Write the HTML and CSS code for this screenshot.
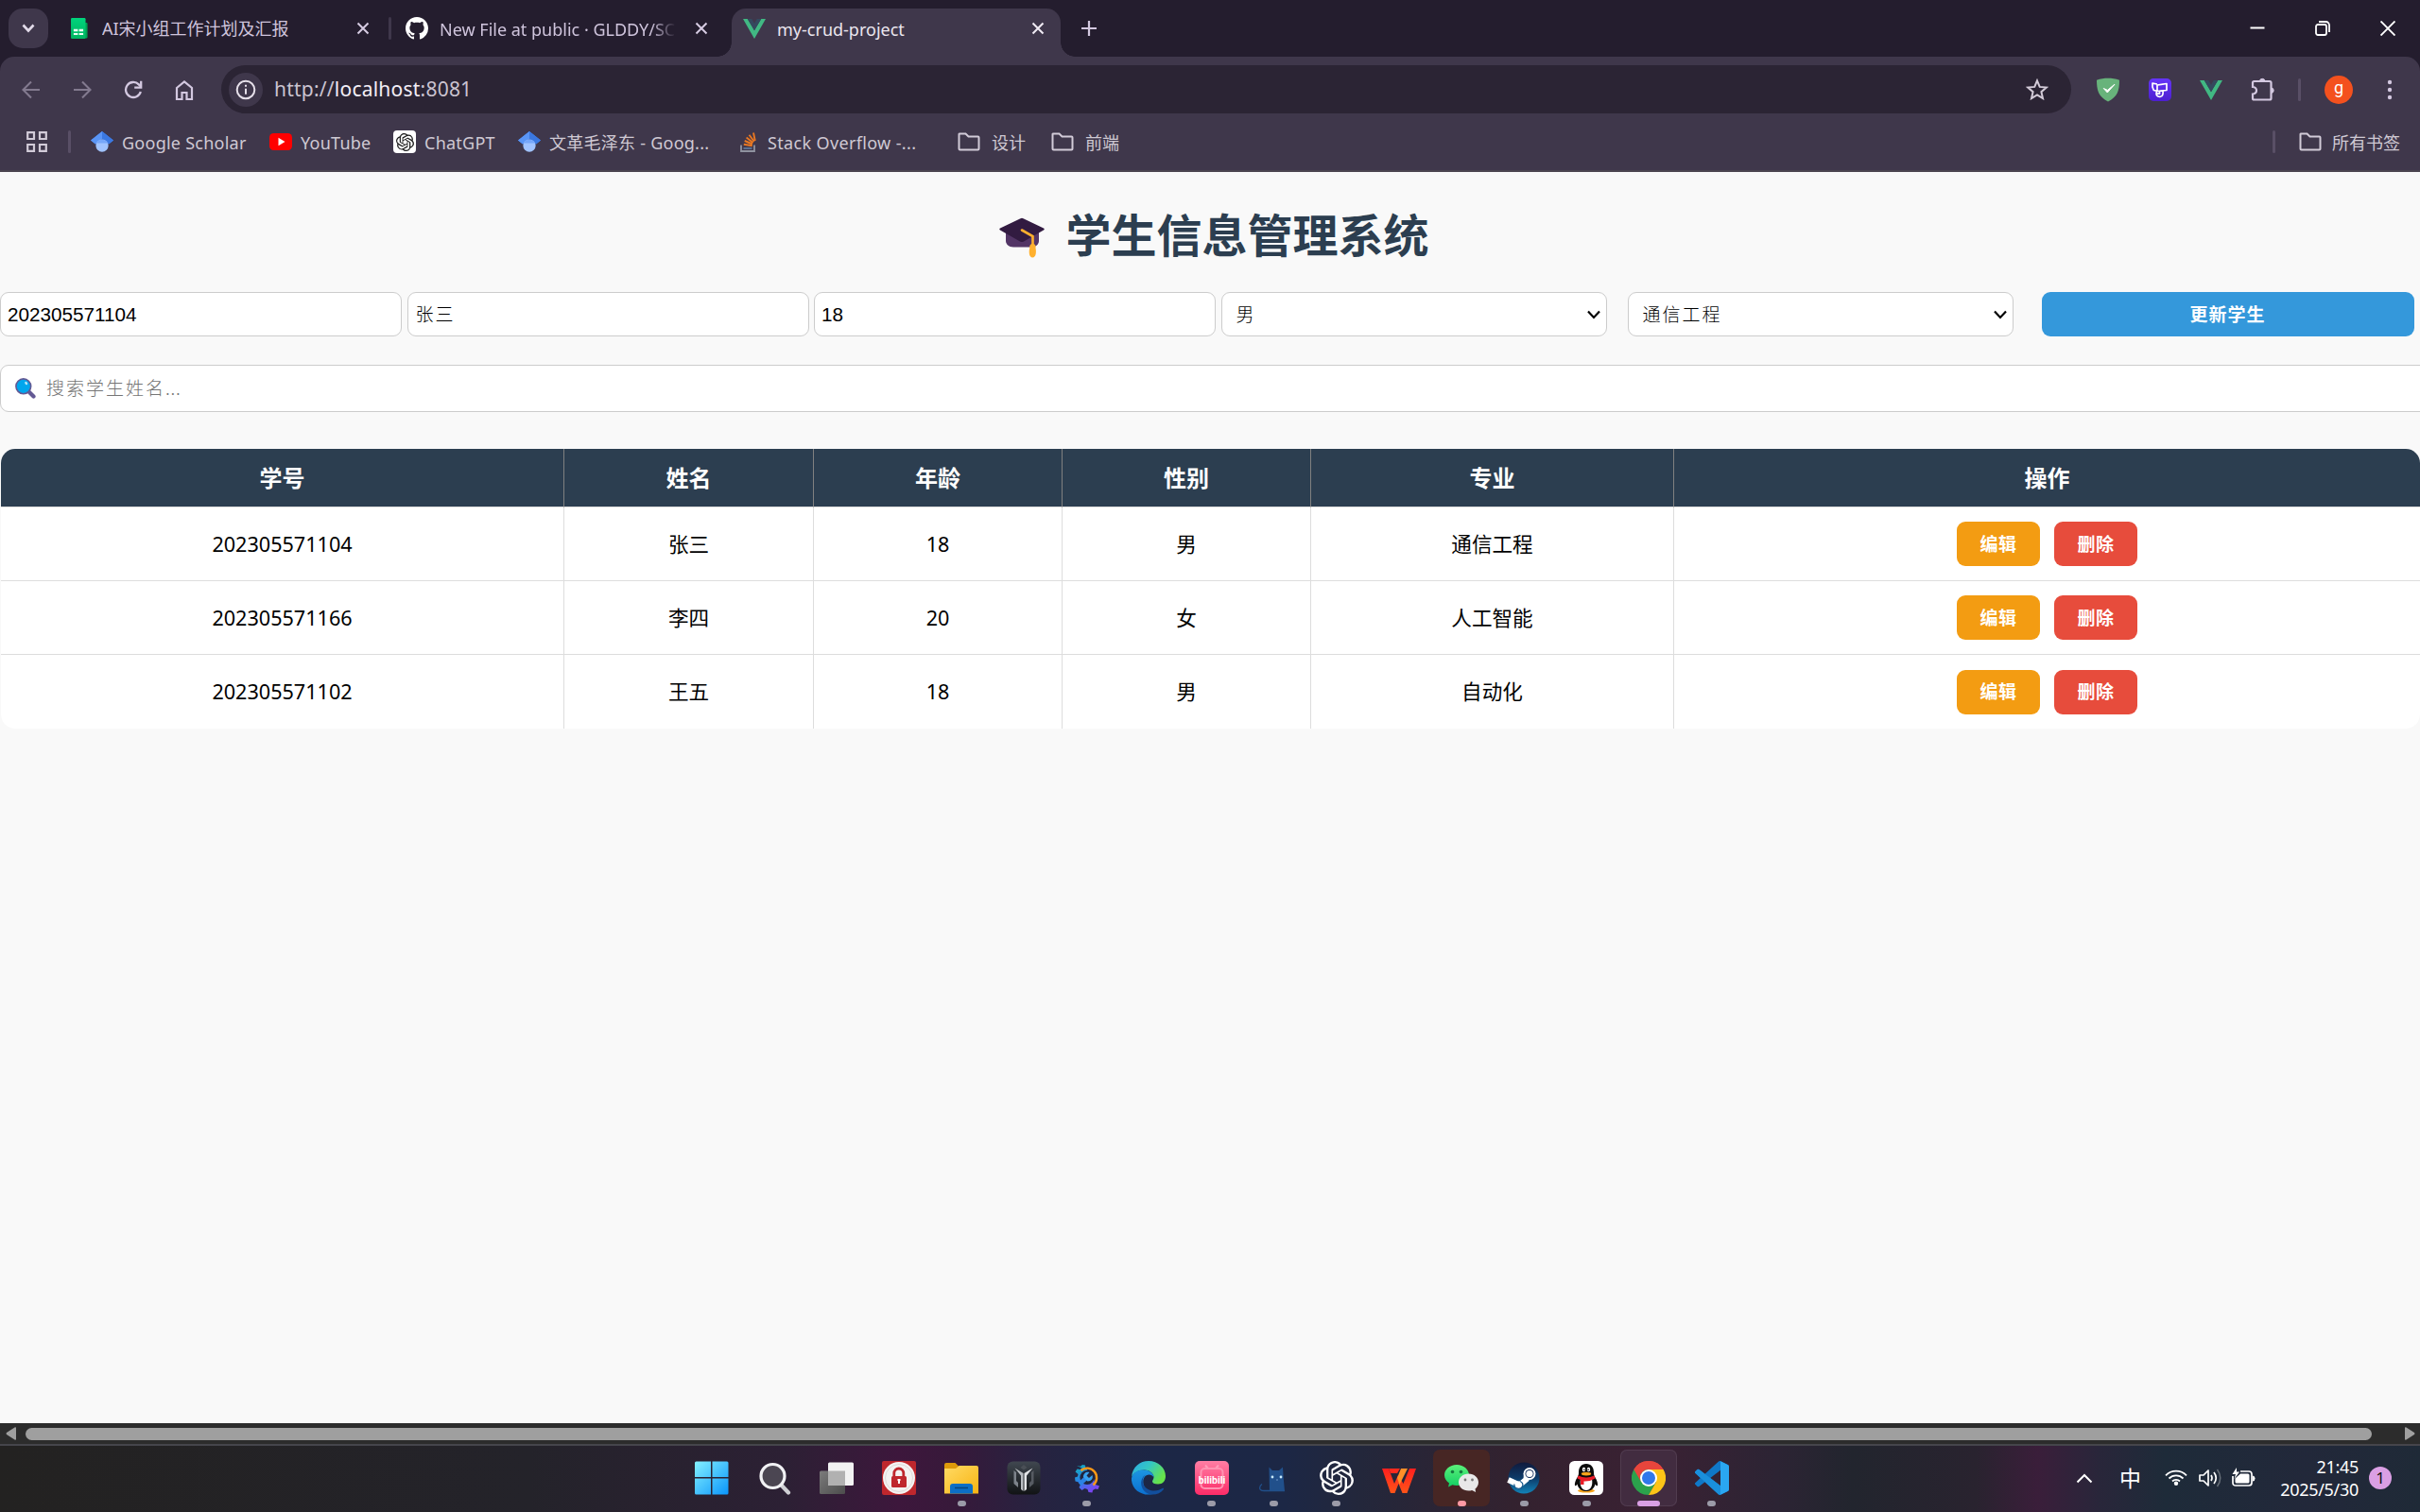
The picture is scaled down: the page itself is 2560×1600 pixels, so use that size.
FILE: index.html
```html
<!DOCTYPE html>
<html lang="zh-CN">
<head>
<meta charset="utf-8">
<title>my-crud-project</title>
<link rel="stylesheet" href="styles.css">
</head>
<body>
<svg class="defs" width="0" height="0" aria-hidden="true">
  <defs>
    <linearGradient id="win" x1="0" y1="0" x2="1" y2="1"><stop offset="0" stop-color="#84f1ff"/><stop offset="1" stop-color="#0a95fb"/></linearGradient>
    <linearGradient id="sheet" x1="0" y1="0" x2="0" y2="1"><stop offset="0" stop-color="#00d47c"/><stop offset="1" stop-color="#00b562"/></linearGradient>
    <linearGradient id="purple" x1="0" y1="0" x2="0" y2="1"><stop offset="0" stop-color="#6535f8"/><stop offset="1" stop-color="#4d1fd0"/></linearGradient>
    <linearGradient id="fold" x1="0" y1="0" x2="1" y2="1"><stop offset="0" stop-color="#ffdb64"/><stop offset="1" stop-color="#f8b413"/></linearGradient>
    <linearGradient id="gear" x1="0" y1="0" x2=".6" y2="1"><stop offset="0" stop-color="#0fb5b4"/><stop offset=".5" stop-color="#2a84e8"/><stop offset="1" stop-color="#7a45f2"/></linearGradient>
    <linearGradient id="edgeTop" x1="0" y1="0" x2="1" y2=".5"><stop offset="0" stop-color="#2aa8e6"/><stop offset=".5" stop-color="#34c7c4"/><stop offset="1" stop-color="#66e34b"/></linearGradient>
    <linearGradient id="edgeLow" x1="0" y1="0" x2="0" y2="1"><stop offset="0" stop-color="#1c96e2"/><stop offset="1" stop-color="#0c70cf"/></linearGradient>
    <linearGradient id="bili" x1="0" y1="0" x2="0" y2="1"><stop offset="0" stop-color="#ff7ea4"/><stop offset="1" stop-color="#fc2c68"/></linearGradient>
    <linearGradient id="wps" x1="0" y1="0" x2="0" y2="1"><stop offset="0" stop-color="#fd1f1f"/><stop offset="1" stop-color="#ff5418"/></linearGradient>
    <linearGradient id="wx" x1="0" y1="0" x2="0" y2="1"><stop offset="0" stop-color="#5bf07a"/><stop offset="1" stop-color="#12cf63"/></linearGradient>
    <linearGradient id="steam" x1="0" y1="0" x2="0" y2="1"><stop offset="0" stop-color="#101a3c"/><stop offset=".5" stop-color="#0d3a68"/><stop offset="1" stop-color="#1283b8"/></linearGradient>
    <linearGradient id="metal" x1="0" y1="0" x2="0" y2="1"><stop offset="0" stop-color="#404750"/><stop offset="1" stop-color="#111315"/></linearGradient>
    <linearGradient id="tv" x1="0" y1="0" x2="1" y2="1"><stop offset="0" stop-color="#7c7c7c"/><stop offset="1" stop-color="#4c4c4c"/></linearGradient>
    <symbol id="close" viewBox="0 0 14 14"><path d="M1.5 1.5 12.5 12.5M12.5 1.5 1.5 12.5" stroke="currentColor" stroke-width="2" fill="none"/></symbol>
    <symbol id="vue" viewBox="0 0 24 21"><path d="M0 0h4.8L12 12.2 19.200 0H24L12 21z" fill="#41b883"/><path d="M4.800 0h4.500L12 4.700 14.700 0h4.500L12 12.200z" fill="#34495e"/></symbol>
    <symbol id="folder" viewBox="0 0 24 20"><path d="M2 1.500h6.500l3 3H21.500a1 1 0 0 1 1 1V17.500a1 1 0 0 1-1 1H2.500a1 1 0 0 1-1-1V2z" fill="none" stroke="#d2cbd8" stroke-width="2"/></symbol>
    <symbol id="scholar" viewBox="0 0 24 22"><path d="M12 0 0 9.500l5 4L12 8l7 5.500 5-4z" fill="#4285f4"/><path d="M12 0v8l-7 5.500L0 9.500z" fill="#5a95f5"/><path d="M12 0 24 9.500l-5 4-7-5.500z" fill="#3b78e0"/><circle cx="12" cy="15.200" r="6.600" fill="#a0c3ff"/><path d="M6 12.600a6.600 6.600 0 0 1 12 0z" fill="#76a7fa"/></symbol>
    <symbol id="openai" viewBox="0 0 24 24"><path fill="currentColor" d="M22.2819 9.8211a5.9847 5.9847 0 0 0-.5157-4.9108 6.0462 6.0462 0 0 0-6.5098-2.9A6.0651 6.0651 0 0 0 4.9807 4.1818a5.9847 5.9847 0 0 0-3.9977 2.9 6.0462 6.0462 0 0 0 .7427 7.0966 5.98 5.98 0 0 0 .511 4.9107 6.051 6.051 0 0 0 6.5146 2.9001A5.9847 5.9847 0 0 0 13.2599 24a6.0557 6.0557 0 0 0 5.7718-4.2058 5.9894 5.9894 0 0 0 3.9977-2.9001 6.0557 6.0557 0 0 0-.7475-7.0729zm-9.022 12.6081a4.4755 4.4755 0 0 1-2.8764-1.0408l.1419-.0804 4.7783-2.7582a.7948.7948 0 0 0 .3927-.6813v-6.7369l2.02 1.1686a.071.071 0 0 1 .038.052v5.5826a4.504 4.504 0 0 1-4.4945 4.4944zm-9.6607-4.1254a4.4708 4.4708 0 0 1-.5346-3.0137l.142.0852 4.783 2.7582a.7712.7712 0 0 0 .7806 0l5.8428-3.3685v2.3324a.0804.0804 0 0 1-.0332.0615L9.74 19.9502a4.4992 4.4992 0 0 1-6.1408-1.6464zM2.3408 7.8956a4.485 4.485 0 0 1 2.3655-1.9728V11.6a.7664.7664 0 0 0 .3879.6765l5.8144 3.3543-2.0201 1.1685a.0757.0757 0 0 1-.071 0l-4.8303-2.7865A4.504 4.504 0 0 1 2.3408 7.872zm16.5963 3.8558L13.1038 8.364 15.1192 7.2a.0757.0757 0 0 1 .071 0l4.8303 2.7913a4.4944 4.4944 0 0 1-.6765 8.1042v-5.6772a.79.79 0 0 0-.407-.667zm2.0107-3.0231l-.142-.0852-4.7735-2.7818a.7759.7759 0 0 0-.7854 0L9.409 9.2297V6.8974a.0662.0662 0 0 1 .0284-.0615l4.8303-2.7866a4.4992 4.4992 0 0 1 6.6802 4.66zM8.3065 12.863l-2.02-1.1638a.0804.0804 0 0 1-.038-.0567V6.0742a4.4992 4.4992 0 0 1 7.3757-3.4537l-.142.0805L8.704 5.459a.7948.7948 0 0 0-.3927.6813zm1.0976-2.3654l2.602-1.4998 2.6069 1.4998v2.9994l-2.5974 1.4997-2.6067-1.4997Z"/></symbol>
  </defs>
</svg>

<header class="tabstrip">
  <button class="tab-search"><svg width="14" height="10" viewBox="0 0 14 10"><path d="M1.500 1.500 7 7.500 12.500 1.500" fill="none" stroke="#e2dbe9" stroke-width="2.600"/></svg></button>
  <div class="tab tab-one">
    <svg width="22" height="27" viewBox="0 0 22 27"><path d="M17 6h3a1.500 1.500 0 0 1 1.500 1.500V25a1.500 1.500 0 0 1-1.500 1.500h-5z" fill="#00a052"/><rect x="0" y="0" width="19" height="27" rx="1.500" fill="url(#sheet)"/><path d="M3.500 14.500h5.500v3H3.500zm7 0h5.500v3h-5.500zm-7 5h5.500v2.500H3.500zm7 0h5.500v2.500h-5.500z" fill="#eafff4"/></svg>
    <span class="tab-title t1">AI宋小组工作计划及汇报</span>
    <svg class="x" width="14" height="14"><use href="#close"/></svg>
  </div>
  <i class="tab-sep"></i>
  <div class="tab tab-two">
    <svg width="24" height="24" viewBox="0 0 16 16"><path fill="#fff" d="M8 0C3.580 0 0 3.580 0 8c0 3.540 2.290 6.530 5.470 7.590.4.070.55-.17.55-.38 0-.19-.01-.82-.01-1.490-2.010.37-2.530-.49-2.690-.94-.09-.23-.48-.94-.82-1.130-.28-.15-.68-.52-.01-.53.63-.01 1.080.58 1.230.82.72 1.210 1.870.87 2.330.66.070-.52.28-.87.51-1.070-1.780-.2-3.640-.89-3.640-3.950 0-.87.31-1.590.82-2.150-.08-.2-.36-1.020.08-2.120 0 0 .67-.21 2.200.82.64-.18 1.320-.27 2-.27s1.360.09 2 .27c1.530-1.040 2.200-.82 2.200-.82.44 1.100.16 1.920.08 2.120.51.56.82 1.270.82 2.150 0 3.070-1.870 3.750-3.650 3.950.29.25.54.73.54 1.480 0 1.070-.01 1.930-.01 2.200 0 .21.15.46.55.38A8.010 8.010 0 0 0 16 8c0-4.420-3.580-8-8-8z"/></svg>
    <span class="tab-title t2">New File at public · GLDDY/SC</span>
    <svg class="x" width="14" height="14"><use href="#close"/></svg>
  </div>
  <div class="tab tab-active">
    <svg class="vue" width="24" height="21"><use href="#vue"/></svg>
    <span class="tab-title t3">my-crud-project</span>
    <svg class="x" width="14" height="14"><use href="#close"/></svg>
  </div>
  <svg class="plus" width="16" height="16" viewBox="0 0 16 16"><path d="M8 0v16M0 8h16" stroke="#d3c8e0" stroke-width="2.200"/></svg>
  <div class="window-buttons">
    <svg width="16" height="16" viewBox="0 0 16 16"><path d="M.5 7.500h15" stroke="#fff" stroke-width="2"/></svg>
    <svg width="16" height="16" viewBox="0 0 16 16"><rect x="1" y="4" width="11" height="11" rx="2" fill="none" stroke="#fff" stroke-width="1.800"/><path d="M4 1h7.500A3.500 3.500 0 0 1 15 4.500V12" fill="none" stroke="#fff" stroke-width="1.800"/></svg>
    <svg width="16" height="16" viewBox="0 0 16 16"><path d="M.5.5l15 15M15.500.5l-15 15" stroke="#fff" stroke-width="1.900"/></svg>
  </div>
</header>

<nav class="chrome">
  <div class="toolbar">
    <div class="nav-icons">
      <svg width="20" height="20" viewBox="0 0 20 20"><path d="M19 10H2M10 1.500 1.500 10l8.500 8.500" fill="none" stroke="#837a8f" stroke-width="2.100"/></svg>
      <svg width="20" height="20" viewBox="0 0 20 20"><path d="M1 10h17M10 1.500 18.500 10 10 18.500" fill="none" stroke="#837a8f" stroke-width="2.100"/></svg>
      <svg width="20" height="20" viewBox="0 0 20 20"><path d="M17.800 12A8 8 0 1 1 15.800 4.400l2 2" fill="none" stroke="#d3c8e0" stroke-width="2.300"/><path d="M18.200.8v6.900h-7" fill="none" stroke="#d3c8e0" stroke-width="2.300"/></svg>
      <svg width="20" height="21" viewBox="0 0 20 21"><path d="M2 8 10 1.500 18 8v12h-5.500v-7h-5v7H2z" fill="none" stroke="#d3c8e0" stroke-width="2.200"/></svg>
    </div>
    <div class="omnibox">
      <span class="info"><svg width="22" height="22" viewBox="0 0 22 22"><circle cx="11" cy="11" r="9.300" fill="none" stroke="#e6e0ea" stroke-width="2"/><path d="M11 9.800v6M11 5.800v2" stroke="#e6e0ea" stroke-width="2"/></svg></span>
      <span class="url">http://<b>localhost</b>:8081</span>
      <svg class="star" width="24" height="23" viewBox="0 0 24 23"><path d="m12 2.300 2.700 6.600 7.100.6-5.400 4.700 1.600 6.900-6-3.700-6 3.700 1.600-6.900L2.200 9.500l7.100-.6z" fill="none" stroke="#d3cbd8" stroke-width="2"/></svg>
    </div>
    <div class="extensions">
      <svg width="26" height="26" viewBox="0 0 26 26"><path d="M13 .8C17 .8 21 1.400 25 2.800 25 14 23 20.500 13 25.500 3 20.500 1 14 1 2.800 5 1.400 9 .8 13 .8z" fill="#68b37b"/><path d="m8.300 11.500 4 4.500L20 7.200l-7.600 6.200z" fill="#fff" stroke="#fff" stroke-width="1"/></svg>
      <svg width="26" height="26" viewBox="0 0 26 26"><rect x="1" y="1" width="24" height="24" rx="5" fill="url(#purple)"/><path d="M10 7 5 6.200V10l1.300 3.500 4 .8M10 8v6.500l10-1V6.500zM9.500 14.500c-1.500 4.500 1 6 3.500 5.800s3.500-2.500 3-6M9.500 17.200h3v-2.500" fill="none" stroke="#fff" stroke-width="1.700" stroke-linejoin="round"/></svg>
      <svg width="24" height="21"><use href="#vue"/></svg>
      <svg width="26" height="26" viewBox="0 0 26 26"><path d="M2 5.500a1.500 1.500 0 0 1 1.500-1.500H20a1.500 1.500 0 0 1 1.500 1.500V22a1.500 1.500 0 0 1-1.500 1.500H3.500A1.500 1.500 0 0 1 2 22v-4.500q4-.5 4-3.800T2 10z" fill="none" stroke="#d3c8e0" stroke-width="2.200"/><path d="M9.500 4a2.700 2.700 0 0 1 5.400 0zM21.500 11a2.700 2.700 0 0 1 0 5.400z" fill="#d3c8e0" stroke="#d3c8e0"/></svg>
      <i class="sep"></i>
      <span class="avatar">g</span>
      <svg width="6" height="22" viewBox="0 0 6 22"><circle cx="3" cy="3" r="2.200" fill="#d3c8e0"/><circle cx="3" cy="11" r="2.200" fill="#d3c8e0"/><circle cx="3" cy="19" r="2.200" fill="#d3c8e0"/></svg>
    </div>
  </div>
  <div class="bookmarks">
    <svg class="grid" width="22" height="22" viewBox="0 0 22 22"><path d="M1.200 1.200h6.800v6.800H1.200zm12.800 0h6.800v6.800H14zM1.200 14h6.800v6.800H1.200zM14 14h6.800v6.800H14z" fill="none" stroke="#d2cbd8" stroke-width="2.200"/></svg>
    <i class="sep"></i>
    <div class="mark m1"><svg width="24" height="26"><use href="#scholar"/></svg><span>Google Scholar</span></div>
    <div class="mark m2"><svg width="24" height="18" viewBox="0 0 24 18"><rect y="0" width="24" height="18" rx="4.500" fill="#f00"/><path d="m9.500 4.800 7 4.200-7 4.200z" fill="#fff"/></svg><span>YouTube</span></div>
    <div class="mark m3"><span class="gpt"><svg width="19" height="19"><use href="#openai"/></svg></span><span>ChatGPT</span></div>
    <div class="mark m4"><svg width="24" height="26"><use href="#scholar"/></svg><span>文革毛泽东 - Goog...</span></div>
    <div class="mark m5"><svg width="17" height="21" viewBox="0 0 17 21"><path d="M1 13.500V20h14v-6.500" fill="none" stroke="#8f93a0" stroke-width="1.800"/><path d="M3.500 17h9" stroke="#5b6f90" stroke-width="2"/><path d="m3.800 12.700 9 1.500M4.700 9l8.300 3.500M6.600 5.600l7 5.400M9.500 2.700l5.300 7M14 .5l1.800 8.500" stroke="#e87722" stroke-width="1.900"/></svg><span>Stack Overflow -...</span></div>
    <div class="mark m6"><svg width="24" height="20"><use href="#folder"/></svg><span>设计</span></div>
    <div class="mark m7"><svg width="24" height="20"><use href="#folder"/></svg><span>前端</span></div>
    <div class="all-marks"><i class="sep"></i><svg width="24" height="20"><use href="#folder"/></svg><span>所有书签</span></div>
  </div>
</nav>

<main class="page">
  <h1><svg width="48" height="48" viewBox="0 0 48 48"><path d="M7 20h35v13c0 3-3 6.500-8 6.500H15C10 39.500 7 36 7 33z" fill="#533566"/><path d="M22.500 9.200q1.500-.8 3 0L47 19.500q1.500 1 0 2L26 33.500q-2 1-4 0L1 21.500q-1.500-1 0-2z" fill="#321b41"/><path d="M24 21.500 35.500 28v10" fill="none" stroke="#ffb02e" stroke-width="2.600" stroke-linecap="round"/><path d="M35.500 36c2.500 0 3.500 2 3 4.500.8 3 .8 10-3.200 10s-4-7-3-10C31.800 38 33 36 35.500 36z" fill="#ffb02e"/></svg><span>学生信息管理系统</span></h1>

  <form class="student-form">
    <input class="field" value="202305571104" aria-label="学号">
    <input class="field zh" value="张三" aria-label="姓名">
    <input class="field" value="18" aria-label="年龄">
    <label class="pick"><span>男</span><svg width="14" height="10" viewBox="0 0 14 10"><path d="M1 1.500 7 8l6-6.500" fill="none" stroke="#000" stroke-width="2.200"/></svg></label>
    <label class="pick major"><span>通信工程</span><svg width="14" height="10" viewBox="0 0 14 10"><path d="M1 1.500 7 8l6-6.500" fill="none" stroke="#000" stroke-width="2.200"/></svg></label>
    <button type="button" class="update">更新学生</button>
  </form>

  <div class="search"><svg width="22" height="22" viewBox="0 0 22 22"><path d="m13.500 13.500 6 6" stroke="#635994" stroke-width="4.200" stroke-linecap="round"/><circle cx="8.800" cy="8.800" r="7.900" fill="#00a6ed" stroke="#635994" stroke-width="1.600"/><ellipse cx="11.700" cy="5.500" rx="1.300" ry="1.900" fill="#b4e6fa" transform="rotate(-35 11.700 5.500)"/></svg><span>搜索学生姓名<em>...</em></span></div>

  <table>
    <colgroup><col class="c1"><col class="c2"><col class="c3"><col class="c4"><col class="c5"><col class="c6"></colgroup>
    <thead><tr><th>学号</th><th>姓名</th><th>年龄</th><th>性别</th><th>专业</th><th>操作</th></tr></thead>
    <tbody>
      <tr><td>202305571104</td><td>张三</td><td>18</td><td>男</td><td>通信工程</td><td><div class="actions"><button class="edit">编辑</button><button class="delete">删除</button></div></td></tr>
      <tr><td>202305571166</td><td>李四</td><td>20</td><td>女</td><td>人工智能</td><td><div class="actions"><button class="edit">编辑</button><button class="delete">删除</button></div></td></tr>
      <tr><td>202305571102</td><td>王五</td><td>18</td><td>男</td><td>自动化</td><td><div class="actions"><button class="edit">编辑</button><button class="delete">删除</button></div></td></tr>
    </tbody>
  </table>
</main>

<div class="scrollbar">
  <svg width="11" height="14" viewBox="0 0 11 14"><path d="M11 1v12q0 1-1.500.5L1 8Q0 7 1 6L9.500.5Q11 0 11 1z" fill="#9f9f9f"/></svg>
  <div class="thumb"></div>
  <svg width="11" height="14" viewBox="0 0 11 14"><path d="M0 1v12q0 1 1.500.5L10 8q1-1 0-2L1.500.5Q0 0 0 1z" fill="#9f9f9f"/></svg>
</div>

<footer class="taskbar">
  <div class="apps">
    <div class="app"><svg viewBox="0 0 36 36"><path d="M0 2q0-1.500 1.500-1.500H17V17H0zM18.500.5H34q1.500 0 1.500 1.500v15h-17zM0 18.500h17V35.500H1.500Q0 35.500 0 34zM18.500 18.500h17V34q0 1.500-1.500 1.500H18.500z" fill="url(#win)"/></svg></div>
    <div class="app"><svg viewBox="0 0 36 36"><path d="m25.500 25.500 7.500 8" stroke="#cfcfd4" stroke-width="4.200" stroke-linecap="round"/><circle cx="16.500" cy="16" r="12.500" fill="#4b4652" stroke="#f1f1f4" stroke-width="3.200"/></svg></div>
    <div class="app"><svg viewBox="0 0 36 36"><rect x="0" y="10.500" width="27" height="24.500" rx="1.500" fill="url(#tv)"/><rect x="9" y="1.500" width="27" height="24.500" rx="1.500" fill="#f2f2f2"/><path d="M9 10.500h18V26H10.500Q9 26 9 24.500z" fill="#b1b1b1"/></svg></div>
    <div class="app"><svg viewBox="0 0 36 36"><rect width="36" height="36" rx="2" fill="#bf272d"/><circle cx="18" cy="18" r="17" fill="#f4f2f1"/><circle cx="18" cy="18" r="14.500" fill="none" stroke="#dedbd9"/><path d="M12.800 18v-5a5 5 0 0 1 10 0v5" fill="none" stroke="#bf272d" stroke-width="2.800"/><rect x="10" y="16" width="16" height="12" rx="1.500" fill="#bf272d"/><path d="M18 19v5M16.500 20h3" stroke="#fff" stroke-width="2"/></svg></div>
    <div class="app run"><svg viewBox="0 0 36 36"><path d="M0 4q0-2 2-2h9.500l3.500 3.500L12 9H0z" fill="#dd9a0a"/><path d="M0 8h12l3.500-3H34q2 0 2 2v27.500H0z" fill="url(#fold)"/><path d="M6 34.500V27q0-3 3-3h18q3 0 3 3v7.500z" fill="#0c6fc6"/><path d="M11 28.500h14" stroke="#07467f" stroke-width="1.600"/></svg></div>
    <div class="app"><svg viewBox="0 0 36 36"><rect x=".5" y=".5" width="35" height="35" rx="6" fill="url(#metal)"/><path d="m18 4 3.500 3-3.500 2.500-3.500-2.500z" fill="#4a4f56"/><path d="M7.500 10v14l4.500 4v-5l-2-2V12z" fill="#7d838b"/><path d="M28.500 10v14l-4.500 4v-5l2-2V12z" fill="#565b62"/><path d="m8.500 7.500 9 5.500v19l-2.500-2V15.500z" fill="#b9bdc2"/><path d="m27.500 7.500-9 5.500v19l2.500-2V15.500z" fill="#e3e5e8"/></svg></div>
    <div class="app run"><svg viewBox="0 0 36 36"><path d="m8 5 4 .8L14 4l3 .5.5 3.500 2 1.500-4 4A6 6 0 0 0 22 23l4-4 2 6 4 1.500-1.500 3.500-3-.5-2.500 1.500-.5 2.500-4-.5-1-3-3-1-3 2-3-3 1.500-3-1.500-2.500-4-1-.5-4 3-1 .5-2.500-3-2.500 2-3 3.500.5 1.500-1.500z" fill="url(#gear)"/><circle cx="19" cy="17.500" r="7.600" fill="#20263f"/><path d="m11 24.500 7-6.500" stroke="#2b83e4" stroke-width="4.500"/><path d="M15 17c0-4 3-6 6.500-5l-3 3.500 2.500 2.500 3.500-3c1.200 3.500-1 6.500-5 6.500z" fill="#39a2ef"/><path d="M12.500 10A9.500 9.500 0 1 1 25.500 25.500" fill="none" stroke="#ff9a16" stroke-width="2.400"/></svg></div>
    <div class="app"><svg viewBox="0 0 36 36"><path d="M0 17C1 6 9 0 18 0c10 0 18 7 18 16 0 5-3 8.500-8 8.500-4 0-6-1-6-3 0-1 1.500-2 1.500-4.500 0-4-5-7.500-10-7.500C7 9.500 2 13 0 17z" fill="url(#edgeTop)"/><path d="M0 18C1.500 12 7 9.500 12.500 9.500c6 0 11 3.500 11 8-1-2-3-3-5-3-4 0-7 4-6 9.500 1.200 6.500 8 11.500 12 10C15 39-1 32 0 18z" fill="url(#edgeLow)"/><path d="M15 14.500c-5 4-4 12 2.500 15.500 6 3 11.500 1.200 15.500-1.200.8-.4 1.400.4.900 1.200-3 4-8 6-13 5.500C9 33.500 7 19 15 14.500z" fill="#124f9d"/></svg></div>
    <div class="app run"><svg viewBox="0 0 36 36"><rect width="36" height="36" rx="5" fill="url(#bili)"/><path d="M11 4.500 14 8M25 4.500 22 8" stroke="#ff9dba" stroke-width="2"/><rect x="6.500" y="8" width="23" height="21" rx="4" fill="none" stroke="#ff93b2" stroke-width="2"/><text x="18" y="24" text-anchor="middle" class="bili">bilibili</text></svg></div>
    <div class="app run"><svg viewBox="0 0 36 36"><path d="M12.500 6.500 16 10h7l4-3.500.5 9L29 32H13Z" fill="#21508b"/><path d="M29 31.500H7c-6 0-5-5-2-7" fill="none" stroke="#21508b" stroke-width="1.300"/><circle cx="16" cy="17" r="1.400" fill="#c9ecff"/><circle cx="25" cy="17" r="1.400" fill="#c9ecff"/><path d="M20 20h2" stroke="#6c95c5"/></svg></div>
    <div class="app run white"><svg viewBox="0 0 24 24"><use href="#openai"/></svg></div>
    <div class="app"><svg viewBox="0 0 36 36"><path d="M0 8h7l6 16 4-9 5.500 9L29 8h7l-9.500 26h-5L17.500 24 13.500 34H9z" fill="url(#wps)"/><path d="M7 8h12l-3 5H9z" fill="#fd2a1d"/><path d="M20 8h7l-8.500 17-2.500-7z" fill="#ff8f28"/></svg></div>
    <div class="app run alert"><svg viewBox="0 0 36 36"><path d="M13 4c7.500 0 13 5 13 11s-5.500 11-13 11q-2.500 0-4.500-.7L4 27.500l1-4C2 21.500 0 18.500 0 15 0 9 5.500 4 13 4z" fill="url(#wx)"/><circle cx="8.500" cy="11.500" r="1.800" fill="#157a3f"/><circle cx="17.500" cy="11.500" r="1.800" fill="#157a3f"/><path d="M25.500 13.500c6 0 10.500 4 10.500 9 0 3-1.500 5.500-3.500 7l.6 3.500-4-2q-1.600.5-3.600.5c-6 0-10.500-4-10.500-9s4.500-9 10.500-9z" fill="#e8e8e8"/><circle cx="22" cy="20" r="1.400" fill="#777"/><circle cx="29.500" cy="20" r="1.400" fill="#777"/></svg></div>
    <div class="app run"><svg viewBox="0 0 36 36"><circle cx="18" cy="18" r="16.500" fill="url(#steam)"/><path d="m1.500 20 12 5.500 7-6 .5-7" fill="none" stroke="#fff" stroke-width="6"/><circle cx="12.500" cy="25.500" r="4" fill="#fff"/><circle cx="24" cy="13.500" r="6.500" fill="#fff"/><circle cx="24" cy="13.500" r="4.500" fill="#16325f"/><circle cx="24" cy="13.500" r="3.600" fill="#fff"/><path d="M8 24.500a4.500 4 0 1 0 6-3" fill="none" stroke="#17588b" stroke-width="1.300"/></svg></div>
    <div class="app run"><svg viewBox="0 0 36 36"><rect width="36" height="36" rx="5.500" fill="#fff"/><ellipse cx="18" cy="31.500" rx="9" ry="2" fill="#f6a41c"/><path d="M18 3c5.500 0 8 4 8 9 0 2 0 3 1.500 5.500 2 3 3 6.500 2.500 8.500-1 .8-2-.5-2.500-1.500-1 5-5 7.500-9.500 7.500S9.500 29.500 8.500 24.500C8 25.500 7 26.800 6 26c-.5-2 .5-5.500 2.500-8.500C10 15 10 14 10 12c0-5 2.500-9 8-9z" fill="#0b0b0b"/><path d="M12 19q6 2 12 0c1.500 8-2 12-6 12s-7.500-4-6-12z" fill="#fff"/><path d="M9.500 15.500q8.500 4 17 0l1 3q-6 3.500-12 3V25h-3.500v-5l-3.500-1.500z" fill="#ea1c27"/><ellipse cx="15.500" cy="9" rx="1.700" ry="2.300" fill="#fff"/><ellipse cx="20.500" cy="9" rx="1.700" ry="2.300" fill="#fff"/><circle cx="15.900" cy="9.300" r=".8"/><circle cx="20.100" cy="9.300" r=".8"/><ellipse cx="18" cy="13.600" rx="5.200" ry="1.900" fill="#f6a41c"/></svg></div>
    <div class="app run current"><svg viewBox="0 0 36 36"><path d="M18 18 2.400 9A18 18 0 0 1 33.600 9z" fill="#e8453c"/><path d="M18 18V0L2.400 9A18 18 0 0 0 18 36l7.800-13.500z" fill="#2ba24c"/><path d="M18 9h15.600A18 18 0 0 1 18 36l7.800-13.500z" fill="#fcc417"/><path d="M2.400 9A18 18 0 0 1 33.600 9H18a9 9 0 0 0-7.800 13.500z" fill="#e8453c"/><circle cx="18" cy="18" r="9" fill="#fff"/><circle cx="18" cy="18" r="7" fill="#2f78ea"/></svg></div>
    <div class="app run"><svg viewBox="0 0 24 24"><path fill="#0f78c8" d="M23.150 2.587L18.210.21a1.494 1.494 0 0 0-1.705.29l-9.460 8.630-4.120-3.128a.999.999 0 0 0-1.276.057L.327 7.261A1 1 0 0 0 .326 8.740L3.899 12 .326 15.260a1 1 0 0 0 .001 1.479L1.650 17.940a.999.999 0 0 0 1.276.057l4.120-3.128 9.460 8.630a1.492 1.492 0 0 0 1.704.29l4.942-2.377A1.500 1.500 0 0 0 24 20.060V3.939a1.500 1.500 0 0 0-.85-1.352zm-5.146 14.861L10.826 12l7.178-5.448v10.896z"/><path d="M18 .1 23.150 2.587A1.500 1.500 0 0 1 24 3.940v16.120a1.500 1.500 0 0 1-.85 1.350L18 23.900z" fill="#2aa7f2"/><path d="M.327 7.261 1.650 6.060a1 1 0 0 1 1.276-.057L18 17.448V23.900q-.8 0-1.500-.4L.326 8.740a1 1 0 0 1 0-1.479z" fill="#1a8fdc"/></svg></div>
  </div>
  <div class="tray">
    <svg class="up" width="18" height="11" viewBox="0 0 18 11"><path d="M1.500 9.500 9 2l7.500 7.500" fill="none" stroke="#fff" stroke-width="2"/></svg>
    <span class="ime">中</span>
    <svg class="wifi" width="24" height="18" viewBox="0 0 24 18"><path d="M1 7.300a15.500 15.500 0 0 1 22 0M4.500 10.500a10.600 10.600 0 0 1 15 0M8 13.500a5.600 5.600 0 0 1 8 0" fill="none" stroke="#fff" stroke-width="1.800"/><circle cx="12" cy="15.700" r="2.200" fill="#fff"/></svg>
    <svg class="vol" width="25" height="20" viewBox="0 0 25 20"><path d="M1 7h4l5-5v16l-5-5H1z" fill="none" stroke="#fff" stroke-width="1.700" stroke-linejoin="round"/><path d="M13 7q2 3 0 6M16 4q4.500 6 0 12" fill="none" stroke="#fff" stroke-width="1.700"/><path d="M19.500 1q6.500 9 0 18" fill="none" stroke="#656d77" stroke-width="1.500"/></svg>
    <svg class="bat" width="26" height="20" viewBox="0 0 26 20"><path d="M9 4h9q3 0 3 3v9q0 3-3 3H4q-3 0-3-3V9" fill="none" stroke="#fff" stroke-width="1.700"/><path d="M9 6.500h8q1.500 0 1.500 1.500v7q0 1.500-1.500 1.500H5q-1.500 0-1.500-1.500v-3.500z" fill="#fff"/><path d="M22 8.500q2.500.5 2.500 3t-2.500 3z" fill="#fff"/><path d="M5 0 .5 7H4l-1.500 5L8 4.500H5z" fill="#fff"/></svg>
    <div class="clock"><span>21:45</span><span>2025/5/30</span></div>
    <span class="badge">1</span>
  </div>
</footer>
</body>
</html>
```

FILE: styles.css
```css
* { box-sizing: border-box; }
body {
  margin: 0;
  width: 2560px;
  height: 1600px;
  overflow: hidden;
  display: flex;
  flex-direction: column;
  background: #f9f9f9;
  font-family: "Noto Sans", "Noto Sans CJK SC", sans-serif;
}
.defs { position: absolute; }
svg { display: block; flex: none; }
button { border: 0; padding: 0; }

/* tab strip */
.tabstrip { height: 75px; margin-bottom: -15px; background: #241d2e; display: flex; align-items: flex-start; padding: 9px 26px 0 9px; font-size: 18px; color: #cfc4dc; flex: none; }
.tab-search { width: 42px; height: 42px; border-radius: 15px; background: #3f374b; display: flex; align-items: center; justify-content: center; }
.tab { display: flex; align-items: center; height: 42px; flex: none; }
.tab-one { margin-left: 22px; width: 330px; }
.tab-one svg:first-child { height: 22px; }
.tab-title { white-space: nowrap; overflow: hidden; line-height: 28px; flex: none; }
.t1 { margin-left: 13px; width: 269px; }
.t2 { margin-left: 12px; width: 266px; margin-right: 4px; padding-top: 1px; -webkit-mask-image: linear-gradient(90deg, #000 84%, transparent 94%); mask-image: linear-gradient(90deg, #000 84%, transparent 94%); }
.t3 { margin-left: 12px; width: 269px; padding-top: 1px; color: #ebe6ef; }
.x { color: #d6cbe2; }
.tab-sep { width: 3px; height: 24px; margin: 9px 15px 0 8px; background: #3f374b; border-radius: 2px; flex: none; }
.tab-two { width: 345px; }
.tab-active { width: 348px; height: 51px; padding: 0 0 9px 12px; background: #3f374b; border-radius: 15px 15px 0 0; position: relative; }
.tab-active .x { color: #f0ebf4; }
.tab-active::before, .tab-active::after { content: ""; position: absolute; bottom: 0; width: 15px; height: 15px; }
.tab-active::before { left: -15px; background: radial-gradient(circle at 0 0, transparent 14.5px, #3f374b 15px); }
.tab-active::after { right: -15px; background: radial-gradient(circle at 100% 0, transparent 14.5px, #3f374b 15px); }
.plus { margin: 13px 0 0 22px; }
.window-buttons { display: flex; gap: 53px; margin: 13px 0 0 auto; }

/* toolbar */
.chrome { position: relative; height: 122px; background: #3f374b; border-bottom: 2px solid #4b454f; border-radius: 15px 15px 0 0; flex: none; }
.toolbar { height: 60px; display: flex; padding-top: 9px; }
.nav-icons { display: flex; align-items: center; gap: 34px; width: 234px; padding-left: 23px; height: 52px; }
.omnibox { width: 1957px; height: 51px; border-radius: 26px; background: #2b2434; display: flex; align-items: center; padding: 0 24px 0 8px; }
.info { width: 36px; height: 36px; border-radius: 50%; background: #3f374b; display: flex; align-items: center; justify-content: center; }
.url { margin-left: 12px; font-size: 21px; line-height: 30px; padding-bottom: 1px; color: #cac3d0; letter-spacing: 0.22px; }
.url b { font-weight: 400; color: #f3eef6; }
.star { margin-left: auto; }
.extensions { display: flex; align-items: center; height: 52px; padding-left: 26px; }
.extensions > :nth-child(2) { margin-left: 29px; }
.extensions > :nth-child(3) { margin-left: 29px; }
.extensions > :nth-child(4) { margin-left: 30px; }
.sep { width: 3px; height: 24px; background: #594f66; border-radius: 2px; flex: none; }
.extensions .sep { margin-left: 24px; }
.avatar { width: 30px; height: 30px; margin: 0 36px 0 25px; border-radius: 50%; background: #f4511e; color: #fff; font: 18px/26px "Roboto", sans-serif; text-align: center; }

/* bookmarks */
.bookmarks { height: 60px; display: flex; align-items: center; padding-left: 28px; font-size: 18px; color: #cfc9d3; }
.bookmarks span { white-space: nowrap; }
.bookmarks > .sep { margin-left: 22px; }
.mark { display: flex; align-items: center; gap: 9px; letter-spacing: 0.25px; line-height: 26px; }
.mark > span:last-child { padding-top: 2px; }
.m1 { margin-left: 21px; width: 189px; }
.m2 { width: 131px; }
.m3 { width: 132px; }
.m4 { width: 235px; }
.m5 { width: 230px; gap: 12px; letter-spacing: 0.35px; }
.m6 { width: 99px; gap: 12px; letter-spacing: 0; }
.m7 { gap: 12px; letter-spacing: 0; }
.m6 > span:last-child, .m7 > span:last-child { padding-top: 1px; }
.gpt { width: 24px; height: 24px; border-radius: 4px; background: #fff; color: #1c1c1c; display: flex; align-items: center; justify-content: center; }
.all-marks { margin-left: auto; padding-right: 21px; display: flex; align-items: center; line-height: 26px; }
.all-marks svg { margin: 0 11px 0 25px; }
.all-marks span { padding-top: 1px; }

/* page */
.page { height: 1324px; flex: none; overflow: hidden; }
h1 { margin: 0; height: 127px; padding: 34px 0 0 9px; display: flex; justify-content: center; gap: 22px; font-size: 48px; line-height: 66px; color: #2c3e50; }
h1 svg { margin-top: 6px; overflow: visible; }
.student-form { display: flex; height: 47px; }
.student-form > * { flex: none; }
.field { width: 425px; height: 47px; margin-right: 5.500px; padding: 0 7px; border: 1.500px solid #ccc; border-radius: 9px; background: #fff; font: 20.700px "Liberation Sans", "Noto Sans CJK SC", sans-serif; color: #000; }
.zh { font-weight: 300; font-size: 19px; letter-spacing: 2px; font-family: "Noto Sans CJK SC", sans-serif; padding-bottom: 3px; padding-left: 8px; }
.pick { width: 408px; height: 47px; margin-right: 22px; padding: 0 6px 0 15px; border: 1.500px solid #ccc; border-radius: 9px; background: #fff; display: flex; align-items: center; justify-content: space-between; font: 300 19px "Noto Sans CJK SC", sans-serif; letter-spacing: 2px; color: #000; }
.pick span { padding-bottom: 3px; }
.major { margin-right: 30px; }
.update { width: 394px; height: 47px; padding-bottom: 3px; border-radius: 9px; background: #3498db; color: #fff; font: 700 19px "Noto Sans CJK SC", sans-serif; letter-spacing: 1px; }
.search { margin-top: 30px; width: 2580px; height: 50px; border: 1.500px solid #ccc; border-radius: 9px; background: #fff; display: flex; align-items: center; gap: 11px; padding-left: 15px; font: 300 19px "Noto Sans CJK SC", sans-serif; letter-spacing: 2px; color: #757575; }
.search span { padding-bottom: 3px; }
.search em { font-style: normal; letter-spacing: 0.800px; }

table { margin: 39px 0 0 1px; width: 2559px; table-layout: fixed; border-collapse: separate; border-spacing: 0; border-radius: 15px; overflow: hidden; background: #fff; }
.c1 { width: 596px; }
.c2 { width: 264px; }
.c3, .c4 { width: 263px; }
.c5 { width: 384px; }
.c6 { width: 789px; }
th, td { padding: 0; text-align: center; border: 0 solid #ddd; border-width: 0 1px 1px 0; }
th:last-child, td:last-child { border-right: 0; }
th { height: 62px; background: #2c3e50; background-clip: padding-box; color: #fff; font-size: 24px; line-height: 30px; border-right-color: #808080; }
td { height: 78px; font-size: 21.600px; line-height: 30px; color: #000; }
tbody tr:last-child td { border-bottom: 0; }
.actions { display: flex; justify-content: center; gap: 15px; }
.actions button { width: 88px; height: 47px; padding-bottom: 3px; border-radius: 9px; color: #fff; font: 700 19px "Noto Sans CJK SC", sans-serif; letter-spacing: 0.500px; }
.edit { background: #f39c12; }
.delete { background: #e74c3c; }

/* scrollbar */
.scrollbar { height: 22px; flex: none; background: #2c2c2c; display: flex; align-items: center; padding: 0 5px 0 6px; }
.thumb { flex: none; width: 2482px; height: 13px; margin: 0 35px 0 10px; border-radius: 7px; background: #9f9f9f; }

/* taskbar */
.taskbar { height: 72px; flex: none; border-top: 2px solid #45454b; display: flex; padding-left: 722.500px; background: linear-gradient(90deg, #232221 0, #24232a 560px, #2c2034 830px, #3d173c 950px, #37193a 1010px, #262340 1100px, #1c2746 1220px, #1c2745 1360px, #23273b 1440px, #33222f 1600px, #3a2133 1750px, #2c2434 1880px, #22252e 1960px, #29232f 2090px, #3a1e3a 2155px, #29263a 2220px, #1e2b39 2290px, #22283a 2440px, #1f2a37 2560px) padding-box, #45454b; }
.apps { display: flex; }
.app { width: 60px; height: 60px; margin: 4px 6.130px 0 0; padding-top: 12px; border-radius: 7px; display: flex; flex-direction: column; align-items: center; flex: none; }
.app svg { width: 36px; height: 36px; }
.run::after { content: ""; width: 9px; height: 6px; margin-top: 6px; border-radius: 3px; background: #9b9ba8; }
.white { color: #fff; }
.alert { background: #472624; }
.alert::after { background: #ff99a4; }
.current { background: #422c40; box-shadow: inset 0 0 0 1px #513c4f; }
.current::after { width: 24px; background: #da9fe4; }
.bili { font: 700 10.500px "Roboto", sans-serif; fill: #fff; }
.tray { display: flex; margin-left: auto; padding-right: 30px; color: #fff; height: 68px; align-items: center; }
.up { margin-right: 1px; }
.ime { margin-left: 27px; margin-top: -2px; font-size: 23px; line-height: 30px; font-weight: 400; font-family: "Noto Sans CJK SC", sans-serif; }
.wifi { margin-left: 25px; margin-top: -2px; }
.vol { margin-left: 12px; margin-top: -1px; }
.bat { margin-left: 10px; margin-top: -2px; }
.clock { width: 108px; display: flex; flex-direction: column; text-align: right; font-size: 18px; line-height: 24px; letter-spacing: -0.300px; }
.badge { width: 24px; height: 24px; border-radius: 50%; background: #da9fe4; color: #111; font-size: 17px; line-height: 23px; text-align: center; margin-left: 11px; }
```
